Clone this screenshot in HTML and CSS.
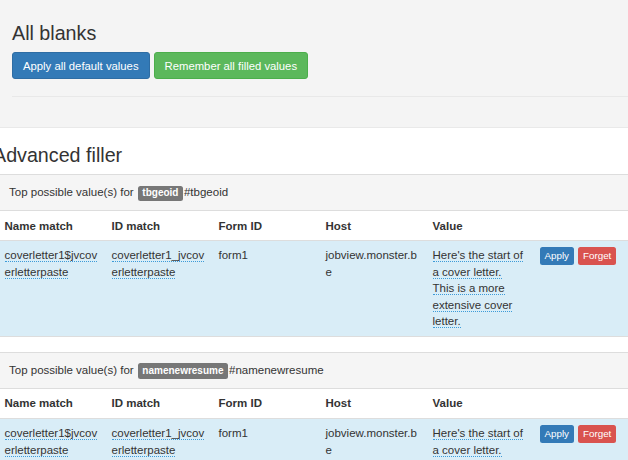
FILE: index.html
```html
<!DOCTYPE html>
<html>
<head>
<meta charset="utf-8">
<link rel="stylesheet" href="styles.css">
</head>
<body>
<section class="blanks">
  <h3 class="title">All blanks</h3>
  <div class="actions">
    <button class="btn btn-primary">Apply all default values</button>
    <button class="btn btn-success">Remember all filled values</button>
  </div>
  <hr class="rule">
</section>
<section class="advanced">
  <h3 class="title title-adv">Advanced filler</h3>

  <div class="panel">
    <div class="panel-heading">Top possible value(s) for <span class="label">tbgeoid</span><span class="sel">#tbgeoid</span></div>
    <table class="grid">
      <colgroup><col class="c"><col class="c"><col class="c"><col class="c"><col class="c"><col></colgroup>
      <thead><tr><th>Name match</th><th>ID match</th><th>Form ID</th><th>Host</th><th>Value</th><th></th></tr></thead>
      <tbody><tr class="info">
        <td class="brk"><span class="dot">coverletter1$jvcoverletterpaste</span></td>
        <td class="brk"><span class="dot">coverletter1_jvcoverletterpaste</span></td>
        <td>form1</td>
        <td class="brk">jobview.monster.be</td>
        <td class="val"><span class="dot">Here's the start of a cover letter. This is a more extensive cover letter.</span></td>
        <td><div class="row-btns"><button class="btn-xs btn-primary">Apply</button><button class="btn-xs btn-danger">Forget</button></div></td>
      </tr></tbody>
    </table>
  </div>

  <div class="panel">
    <div class="panel-heading">Top possible value(s) for <span class="label">namenewresume</span><span class="sel">#namenewresume</span></div>
    <table class="grid">
      <colgroup><col class="c"><col class="c"><col class="c"><col class="c"><col class="c"><col></colgroup>
      <thead><tr><th>Name match</th><th>ID match</th><th>Form ID</th><th>Host</th><th>Value</th><th></th></tr></thead>
      <tbody><tr class="info">
        <td class="brk"><span class="dot">coverletter1$jvcoverletterpaste</span></td>
        <td class="brk"><span class="dot">coverletter1_jvcoverletterpaste</span></td>
        <td>form1</td>
        <td class="brk">jobview.monster.be</td>
        <td class="val"><span class="dot">Here's the start of a cover letter. This is a more extensive cover letter.</span></td>
        <td><div class="row-btns"><button class="btn-xs btn-primary">Apply</button><button class="btn-xs btn-danger">Forget</button></div></td>
      </tr></tbody>
    </table>
  </div>
</section>
</body>
</html>
```
FILE: styles.css
```css
html, body {
  margin: 0;
  padding: 0;
  background: #fff;
  font-family: "Liberation Sans", Arial, Helvetica, sans-serif;
  font-size: 11.5px;
  line-height: 16.4px;
  color: #333;
  overflow: hidden;
}
.blanks {
  background: #f4f4f4;
  padding: 22px 0 30px 12px;
  border-bottom: 1px solid #e9e9e9;
}
.title {
  margin: 0;
  font-size: 19.7px;
  font-weight: 500;
  line-height: 22px;
  color: #333;
}
.actions {
  display: flex;
  gap: 4px;
  margin-top: 8px;
}
.btn {
  height: 27px;
  padding: 0 10px;
  border: 1px solid transparent;
  border-radius: 3px;
  font-family: inherit;
  font-size: 11.3px;
  color: #fff;
}
.btn-primary { background: #337ab7; border-color: #2e6da4; color: #fff; }
.btn-success { background: #5cb85c; border-color: #4cae4c; color: #fff; }
.btn-danger { background: #d9534f; border-color: #d43f3a; color: #fff; }
.rule {
  margin: 17px 0 0 0;
  border: 0;
  border-top: 1px solid #e8e8e8;
  height: 0;
}
.advanced {
  padding-top: 16px;
}
.title-adv {
  margin-left: -7px;
  margin-bottom: 8px;
}
.panel {
  margin: 0 -4px 15px -3px;
  border: 1px solid #ddd;
  border-radius: 3px;
  background: #fff;
}
.panel-heading {
  background: #f5f5f5;
  border-bottom: 1px solid #ddd;
  padding: 9px 12px 9px 11px;
  line-height: 16.4px;
}
.label {
  display: inline-block;
  background: #777;
  color: #fff;
  font-weight: bold;
  font-size: 10px;
  line-height: 10px;
  padding: 2.5px 4.5px 3px;
  border-radius: 2.5px;
  vertical-align: 0px;
  margin-left: 1px;
}
.sel { margin-left: 1px; }
.grid {
  width: 100%;
  border-collapse: collapse;
  table-layout: fixed;
}
.grid col.c { width: 107px; }
.grid th {
  text-align: left;
  font-weight: bold;
  padding: 6.5px 6.5px 6px;
  line-height: 16.4px;
  border-bottom: 1px solid #ddd;
}
.grid td {
  vertical-align: top;
  padding: 6.5px 6.5px;
  line-height: 16.4px;
}
.grid td.val { padding-right: 9px; }
.info td { background: #d9edf7; }
.brk { word-break: break-all; }
.dot { border-bottom: 1px dotted #3d9bd8; }
.row-btns {
  display: flex;
  gap: 4px;
}
.btn-xs {
  height: 18px;
  padding: 0 4px;
  border: 1px solid transparent;
  border-radius: 2.5px;
  font-family: inherit;
  font-size: 9.8px;
  line-height: 16px;
}
```
